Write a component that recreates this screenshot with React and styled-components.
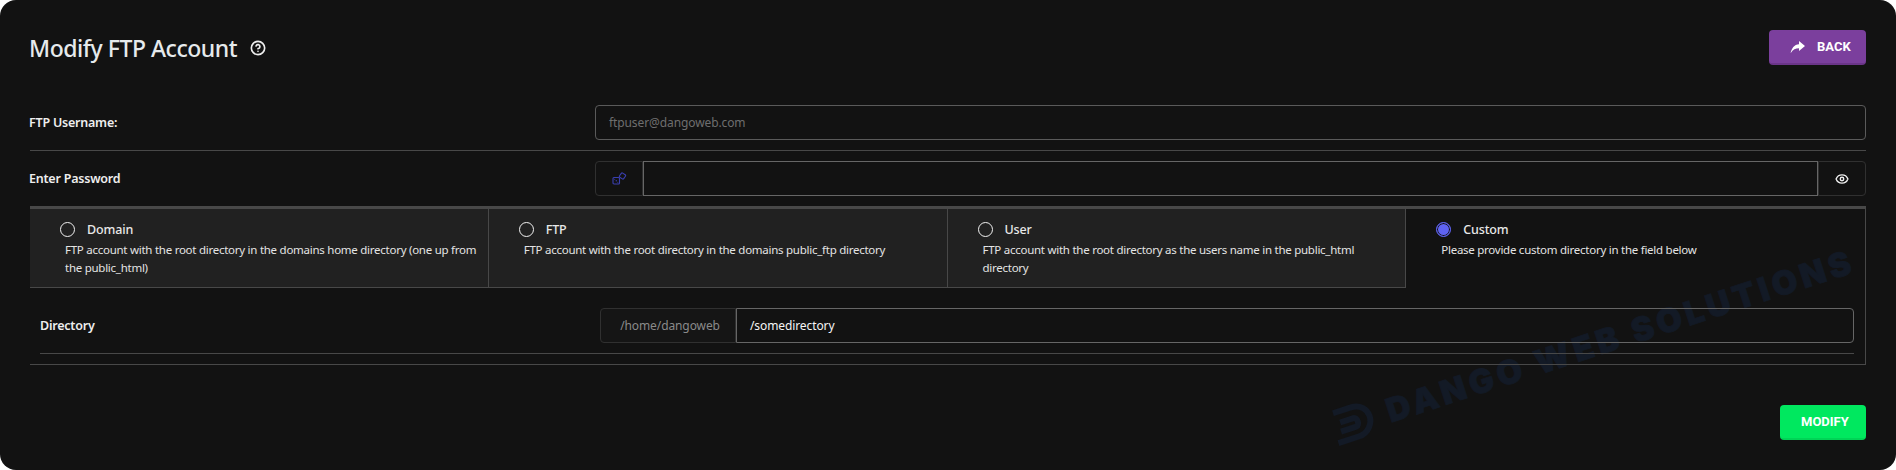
import React from 'react';
import styled, { createGlobalStyle } from 'styled-components';
import { LuEye, LuCircleHelp } from 'react-icons/lu';

const GlobalStyle = createGlobalStyle`
    html, body {
        margin: 0;
        background: #fff;
    }
    * {
        box-sizing: border-box;
    }
`;

const LINE = '#484848';

const Card = styled.div`
    position: relative;
    width: 1896px;
    height: 470px;
    overflow: hidden;
    border-radius: 16px;
    background: #121212;
    color: #f0f0f0;
    font-family: "Noto Sans", sans-serif;
`;

const Content = styled.div`
    position: relative;
    z-index: 1;
    padding: 30px 30px 0;
`;

const Header = styled.div`
    display: flex;
    align-items: center;
    justify-content: space-between;
    height: 35px;
    margin-bottom: 40px;
`;

const TitleGroup = styled.div`
    display: flex;
    align-items: center;
    gap: 13px;
`;

const Title = styled.h1`
    margin: 0 0 0 -1px;
    font-size: 23px;
    font-weight: 500;
    letter-spacing: -0.46px;
    color: #e6eaec;
`;

const Button = styled.button`
    display: flex;
    align-items: center;
    gap: 12px;
    height: 35px;
    width: ${(props) => props.$width};
    padding: 0 0 0 21px;
    border: 0;
    border-bottom: 2px solid ${(props) => props.$shade};
    border-radius: 4px;
    background: ${(props) => props.$color};
    color: #fff;
    font-family: Roboto, sans-serif;
    font-size: 13px;
    font-weight: 700;
`;

const Row = styled.div`
    display: flex;
    height: ${(props) => (props.$plain ? '45px' : '46px')};
    border-bottom: ${(props) => (props.$plain ? 'none' : `1px solid ${LINE}`)};
    margin-bottom: ${(props) => (props.$plain ? '0' : '10px')};
`;

const Label = styled.label`
    display: flex;
    align-items: center;
    width: 566px;
    height: 35px;
    margin-left: -1px;
    font-size: 12.5px;
    font-weight: 600;
    letter-spacing: -0.22px;
    color: #eee;
`;

const TextField = styled.div`
    flex: 1;
    display: flex;
    align-items: center;
    height: 35px;
    padding: 0 13px;
    border: 1px solid ${(props) => props.$border || '#666'};
    border-radius: ${(props) => props.$radius || '4px'};
    font-size: 12px;
    letter-spacing: -0.1px;
    color: ${(props) => (props.$muted ? '#6e6e6e' : '#f5f5f5')};
`;

const Group = styled.div`
    flex: 1;
    display: flex;
`;

const Addon = styled.div`
    display: flex;
    align-items: center;
    justify-content: center;
    flex: none;
    width: ${(props) => props.$width};
    height: 35px;
    padding-left: ${(props) => props.$inset || '0'};
    border: 1px solid #303030;
    border-radius: ${(props) => props.$radius};
    background: ${(props) => props.$bg || 'transparent'};
    font-size: 12px;
    letter-spacing: -0.1px;
    color: #8a8a8a;
`;

const Options = styled.div`
    height: 159px;
    border-top: 3px solid ${LINE};
    border-right: 1px solid ${LINE};
    border-bottom: 1px solid ${LINE};
`;

const Tabs = styled.div`
    display: grid;
    grid-template-columns: repeat(4, 1fr);
    height: 79px;
`;

const Tab = styled.div`
    padding: 10px 0 0 30px;
    background: ${(props) => (props.$active ? 'transparent' : '#212121')};
    border-right: ${(props) => (props.$active ? 'none' : `1px solid ${LINE}`)};
    border-bottom: ${(props) => (props.$active ? 'none' : `1px solid ${LINE}`)};
`;

const OptionHead = styled.div`
    display: flex;
    align-items: center;
    gap: 12px;
    height: 20px;
`;

const Radio = styled.span`
    flex: none;
    width: 15px;
    height: 15px;
    border-radius: 50%;
    border: ${(props) => (props.$on ? '1px solid #5f63f2' : '1.8px solid #f2f2f2')};
    background: ${(props) => (props.$on ? '#5f63f2' : 'transparent')};
    box-shadow: ${(props) => (props.$on ? 'inset 0 0 0 1px #121212' : 'none')};
`;

const OptionName = styled.span`
    font-size: 12.5px;
    font-weight: 500;
    letter-spacing: -0.15px;
    color: #e8e8e8;
`;

const OptionText = styled.p`
    margin: 2px 0 0 5px;
    width: 418px;
    font-size: 11.5px;
    line-height: 18px;
    letter-spacing: -0.26px;
    color: #e4e4e4;
`;

const DirRow = styled.div`
    display: flex;
    height: 46px;
    margin: 20px 11px 0 10px;
    border-bottom: 1px solid ${LINE};
`;

const DirLabel = styled(Label)`
    width: 560px;
    margin-left: 0;
`;

const Footer = styled.div`
    display: flex;
    justify-content: flex-end;
    margin-top: 40px;
`;

const Watermark = styled.div`
    position: absolute;
    left: 1330px;
    top: 408px;
    display: flex;
    align-items: center;
    gap: 12px;
    height: 44px;
    transform: rotate(-18deg);
    transform-origin: left center;
    color: #131a26;
    font-family: Inter, sans-serif;
    font-size: 33px;
    font-weight: 900;
    letter-spacing: 4.2px;
    -webkit-text-stroke: 0.8px #131a26;
    white-space: nowrap;
`;

const options = [
    { name: 'Domain', text: 'FTP account with the root directory in the domains home directory (one up from the public_html)' },
    { name: 'FTP', text: 'FTP account with the root directory in the domains public_ftp directory' },
    { name: 'User', text: 'FTP account with the root directory as the users name in the public_html directory' },
    { name: 'Custom', text: 'Please provide custom directory in the field below', active: true },
];

const BackArrow = () => (
    <svg width="15" height="14" viewBox="0 0 15 14" fill="#fff">
        <path d="M9 1l6 5-6 5V8.3C5.6 8.300 3 9.500.6 13.200 1.400 8.500 4.300 4.500 9 4.200z" />
    </svg>
);

const DiceIcon = () => (
    <svg width="15" height="14" viewBox="0 0 15 14" fill="none" stroke="#3a3fb0" strokeWidth="1.1">
        <rect x="1" y="5.500" width="6.500" height="6.500" rx="1" />
        <rect x="8" y="1.500" width="5" height="5" rx="1" transform="rotate(35 10.500 4)" />
        <circle cx="4.250" cy="8.750" r="0.700" fill="#3a3fb0" stroke="none" />
        <circle cx="2.700" cy="7.200" r="0.500" fill="#3a3fb0" stroke="none" />
        <circle cx="5.800" cy="10.300" r="0.500" fill="#3a3fb0" stroke="none" />
    </svg>
);

const App = () => {
    return (
        <Card>
            <GlobalStyle />
            <Watermark>
                <svg width="48" height="44" viewBox="0 0 48 44" fill="none" stroke="currentColor" strokeWidth="6">
                    <path d="M8 7h18c11 0 16 7 16 14s-6 16-16 16H4" />
                    <path d="M12 18h14c4 0 4 9 0 9H10" />
                </svg>
                DANGO WEB SOLUTIONS
            </Watermark>
            <Content>
                <Header>
                    <TitleGroup>
                        <Title>Modify FTP Account</Title>
                        <LuCircleHelp size={16} color="#eee" strokeWidth={2.5} />
                    </TitleGroup>
                    <Button $width="97px" $color="#7b3f9d" $shade="#6b3589">
                        <BackArrow />
                        BACK
                    </Button>
                </Header>

                <Row>
                    <Label>FTP Username:</Label>
                    <TextField $muted $border="#5a5a5a">ftpuser@dangoweb.com</TextField>
                </Row>
                <Row $plain>
                    <Label>Enter Password</Label>
                    <Group>
                        <Addon $width="48px" $radius="4px 0 0 4px"><DiceIcon /></Addon>
                        <TextField $radius="0" />
                        <Addon $width="48px" $radius="0 4px 4px 0"><LuEye size={14} color="#eee" strokeWidth={2.4} /></Addon>
                    </Group>
                </Row>

                <Options>
                    <Tabs>
                        {options.map((option) => (
                            <Tab key={option.name} $active={option.active}>
                                <OptionHead>
                                    <Radio $on={option.active} />
                                    <OptionName>{option.name}</OptionName>
                                </OptionHead>
                                <OptionText>{option.text}</OptionText>
                            </Tab>
                        ))}
                    </Tabs>
                    <DirRow>
                        <DirLabel>Directory</DirLabel>
                        <Group>
                            <Addon $width="136px" $radius="4px 0 0 4px" $bg="#151515" $inset="4px">/home/dangoweb</Addon>
                            <TextField $radius="0 4px 4px 0">/somedirectory</TextField>
                        </Group>
                    </DirRow>
                </Options>

                <Footer>
                    <Button $width="86px" $color="#00e85f" $shade="#00d456">MODIFY</Button>
                </Footer>
            </Content>
        </Card>
    );
};

export default App;
